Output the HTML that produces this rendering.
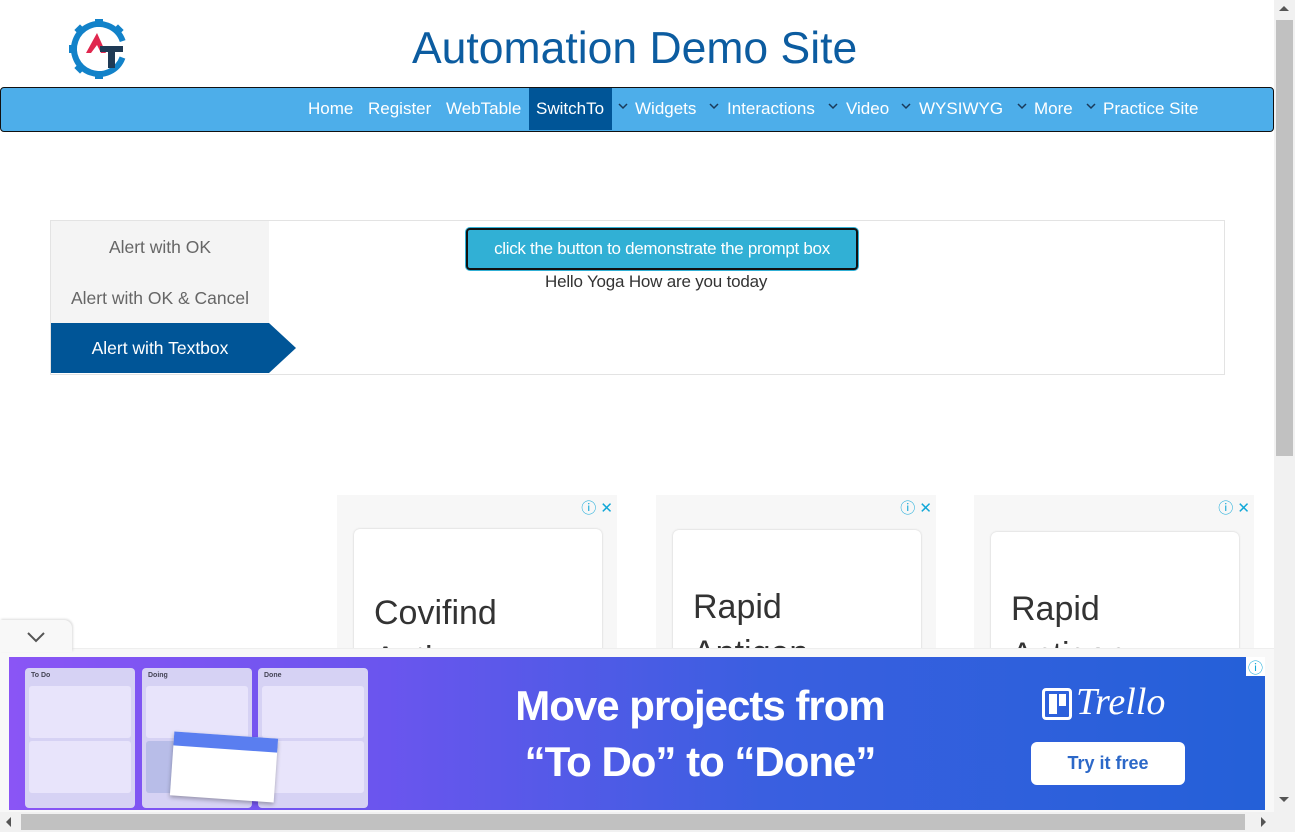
<!DOCTYPE html>
<html><head><meta charset="utf-8"><style>
*{box-sizing:border-box;margin:0;padding:0}
body{width:1295px;height:832px;overflow:hidden;position:relative;background:#fff;font-family:"Liberation Sans",Arial,sans-serif}
.a{position:absolute}
.nav span{position:absolute;top:0;height:42px;line-height:42px;color:#fff;font-size:17px}
.chev{top:14px!important;width:8px;height:8px;}
.chev svg{display:block}
.tab{position:absolute;left:51px;width:218px;height:50px;line-height:50px;text-align:center;font-size:17.5px;color:#666}
.ad{position:absolute;top:495px;width:280px;height:160px;background:#f7f7f7}
.card{position:absolute;left:17px;width:248px;height:200px;background:#fff;border-radius:6px;box-shadow:0 0 2px #ccc}
.card div{position:absolute;left:20px;font-size:34px;color:#333;line-height:46px}
.ic{position:absolute;top:2px;right:4px;color:#12a8d8;font-size:15px}
.col{position:absolute;top:668px;width:110px;height:140px;background:#d6d2f4;border-radius:4px}
.col b{display:block;font-size:7px;color:#445;padding:4px 6px}
.cd{margin:3px 4px;height:52px;background:#e8e4fb;border-radius:3px}
</style></head><body>
<svg class="a" style="left:68px;top:18px" width="62" height="62" viewBox="0 0 62 62">
<g fill="#1282c9"><circle cx="31" cy="31" r="25" fill="none" stroke="#1282c9" stroke-width="6" stroke-dasharray="140 17" transform="rotate(20 31 31)"/>
<rect x="27" y="1" width="8" height="8"/><rect x="27" y="53" width="8" height="8"/><rect x="1" y="27" width="8" height="8"/>
<rect x="8" y="8" width="8" height="8" transform="rotate(45 12 12)"/><rect x="46" y="8" width="8" height="8" transform="rotate(45 50 12)"/><rect x="8" y="46" width="8" height="8" transform="rotate(45 12 50)"/></g>
<path d="M18 35 L29 15 L38 35 L33 35 L29 27 L23 35Z" fill="#e0274e"/>
<path d="M32 28 H55 V34 H47 V50 H40 V34 H32Z" fill="#1f3a55"/></svg>
<div class="a" style="left:412px;top:24px;font-size:44.5px;color:#0c5ca0">Automation Demo Site</div>
<div class="a nav" style="left:0;top:87px;width:1274px;height:45px;background:#4daeea;border:1px solid #111;border-radius:4px">
<span style="left:528px;width:83px;background:#005597"></span>
<span style="left:307px">Home</span><span style="left:367px">Register</span><span style="left:445px">WebTable</span><span style="left:535px">SwitchTo</span>
<span class="chev" style="left:617px"><svg width="10" height="8"><path d="M1 2 L5 6 L9 2" fill="none" stroke="#1a3a5a" stroke-width="1.5"/></svg></span><span style="left:634px">Widgets</span>
<span class="chev" style="left:708px"><svg width="10" height="8"><path d="M1 2 L5 6 L9 2" fill="none" stroke="#1a3a5a" stroke-width="1.5"/></svg></span><span style="left:726px">Interactions</span>
<span class="chev" style="left:827px"><svg width="10" height="8"><path d="M1 2 L5 6 L9 2" fill="none" stroke="#1a3a5a" stroke-width="1.5"/></svg></span><span style="left:845px">Video</span>
<span class="chev" style="left:900px"><svg width="10" height="8"><path d="M1 2 L5 6 L9 2" fill="none" stroke="#1a3a5a" stroke-width="1.5"/></svg></span><span style="left:918px">WYSIWYG</span>
<span class="chev" style="left:1016px"><svg width="10" height="8"><path d="M1 2 L5 6 L9 2" fill="none" stroke="#1a3a5a" stroke-width="1.5"/></svg></span><span style="left:1033px">More</span>
<span class="chev" style="left:1085px"><svg width="10" height="8"><path d="M1 2 L5 6 L9 2" fill="none" stroke="#1a3a5a" stroke-width="1.5"/></svg></span><span style="left:1102px">Practice Site</span></div>
<div class="a" style="left:50px;top:220px;width:1175px;height:155px;border:1px solid #e3e3e3"></div>
<div class="a" style="left:51px;top:221px;width:218px;height:102px;background:#f4f4f4"></div>
<div class="tab" style="top:222px">Alert with OK</div>
<div class="tab" style="top:273px">Alert with OK &amp; Cancel</div>
<div class="tab" style="top:323px;background:#005597;color:#fff">Alert with Textbox</div>
<div class="a" style="left:269px;top:323px;width:0;height:0;border-top:25px solid transparent;border-bottom:25px solid transparent;border-left:27px solid #005597"></div>
<div class="a" style="left:466px;top:228px;width:392px;height:42px;background:#31b0d5;border:2px solid #111;border-radius:4px;box-shadow:0 0 0 1px #31b0d5;color:#fff;font-size:17px;text-align:center;line-height:38px;letter-spacing:-0.3px">click the button to demonstrate the prompt box</div>
<div class="a" style="left:545px;top:272px;font-size:17px;color:#333;letter-spacing:-0.2px">Hello Yoga How are you today</div>
<div class="ad" style="left:337px"><span class="ic">ⓘ ✕</span><div class="card" style="top:34px"><div style="top:61px">Covifind<br>Antigen</div></div></div>
<div class="ad" style="left:656px"><span class="ic">ⓘ ✕</span><div class="card" style="top:35px"><div style="top:54px">Rapid<br>Antigen</div></div></div>
<div class="ad" style="left:974px"><span class="ic">ⓘ ✕</span><div class="card" style="top:37px"><div style="top:54px">Rapid<br>Antigen</div></div></div>
<div class="a" style="left:0;top:648px;width:1274px;height:164px;background:#f8f8f8;border-top:1px solid #eee"></div>
<div class="a" style="left:0;top:620px;width:72px;height:32px;background:#f8f8f8;border-radius:0 8px 0 0;box-shadow:1px -1px 2px #ddd"><svg style="position:absolute;left:26px;top:11px" width="20" height="12"><path d="M2 2 L10 10 L18 2" fill="none" stroke="#555" stroke-width="2"/></svg></div>
<div class="a" style="left:9px;top:657px;width:1256px;height:153px;background:linear-gradient(90deg,#8a55f5 0%,#6a55ee 30%,#3a5fe0 60%,#2460d8 100%)"></div>
<div class="col" style="left:25px"><b>To Do</b><div class="cd"></div><div class="cd"></div></div>
<div class="col" style="left:142px"><b>Doing</b><div class="cd"></div><div class="cd" style="background:#b8bde8"></div></div>
<div class="col" style="left:258px"><b>Done</b><div class="cd"></div><div class="cd"></div></div>
<div class="a" style="left:172px;top:735px;width:104px;height:64px;background:#fff;transform:rotate(4deg);border-top:14px solid #5a7ef0;box-shadow:0 2px 4px rgba(0,0,0,.3)"></div>
<div class="a" style="left:490px;top:678px;width:420px;text-align:center;color:#fff;font-size:42px;line-height:56px;font-weight:bold;letter-spacing:-1px">Move projects from<br>“To Do” to “Done”</div>
<div class="a" style="left:1042px;top:688px;width:30px;height:32px;border:3px solid #fff;border-radius:4px"><div style="position:absolute;left:4px;top:3px;width:8px;height:20px;background:#fff"></div><div style="position:absolute;left:14px;top:3px;width:7px;height:12px;background:#fff"></div></div>
<div class="a" style="left:1076px;top:680px;color:#fff;font-size:38px;font-style:italic;font-family:'Liberation Serif',serif">Trello</div>
<div class="a" style="left:1031px;top:742px;width:154px;height:43px;background:#fff;border-radius:6px;text-align:center;line-height:43px;color:#2c68c8;font-weight:bold;font-size:18px">Try it free</div>
<div class="a" style="left:1246px;top:657px;width:19px;height:19px;background:#fff;color:#12a8d8;font-size:15px;text-align:center">ⓘ</div>
<div class="a" style="left:1274px;top:0;width:21px;height:812px;background:#f1f1f1"></div>
<div class="a" style="left:1276px;top:20px;width:17px;height:436px;background:#c1c1c1"></div>
<div class="a" style="left:1279px;top:6px;border:5px solid transparent;border-bottom:5px solid #555;border-top:0"></div>
<div class="a" style="left:1279px;top:797px;border:5px solid transparent;border-top:5px solid #555;border-bottom:0"></div>
<div class="a" style="left:0;top:812px;width:1295px;height:20px;background:#f1f1f1"></div>
<div class="a" style="left:21px;top:814px;width:1224px;height:16px;background:#c1c1c1"></div>
<div class="a" style="left:6px;top:817px;border:5px solid transparent;border-right:5px solid #555;border-left:0"></div>
<div class="a" style="left:1261px;top:817px;border:5px solid transparent;border-left:5px solid #555;border-right:0"></div>
</body></html>
